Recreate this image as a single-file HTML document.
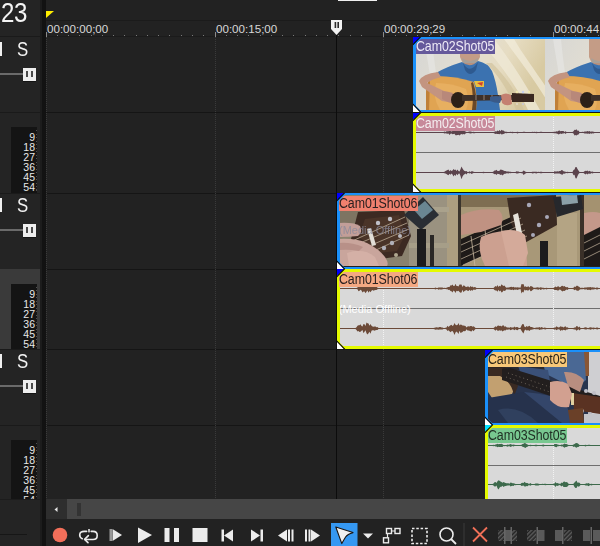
<!DOCTYPE html><html><head><meta charset="utf-8"><style>
*{margin:0;padding:0;box-sizing:border-box}
html,body{width:600px;height:546px;overflow:hidden;background:#222;font-family:"Liberation Sans",sans-serif;position:relative}
.a{position:absolute}
.S{font-size:19px;color:#f2f2f2;line-height:19px}
.num{font-size:10.5px;line-height:10px;color:#e8e8e8;text-align:right}
.rt{font-size:11.6px;color:#d8d8d8;line-height:12px;white-space:nowrap}
.lbl{font-size:14px;line-height:14px;white-space:nowrap;overflow:hidden;height:15px;width:79px}.lbl span{display:inline-block;transform:scaleX(0.885);transform-origin:0 0;letter-spacing:-0.1px;margin-left:-0.5px}
</style></head><body>
<div class="a" style="left:0px;top:0px;width:40px;height:546px;background:#242424;"></div>
<div class="a" style="left:40px;top:0px;width:6px;height:546px;background:#121212;"></div>
<div class="a" style="left:40px;top:0px;width:2px;height:546px;background:#1c1c1c;"></div>
<div class="a" style="left:1.3px;top:-2px;font-size:28px;color:#f4f4f4;line-height:30px;letter-spacing:-0.5px;transform:scaleX(0.86);transform-origin:0 0">23</div>
<div class="a" style="left:0px;top:36px;width:40px;height:1px;background:#1a1a1a;"></div>
<div class="a" style="left:0px;top:112px;width:40px;height:1px;background:#1a1a1a;"></div>
<div class="a" style="left:0px;top:42px;width:2px;height:14px;background:#f0f0f0;"></div>
<div class="a S" style="left:17px;top:40px;font-size:20px;transform:scaleX(0.84);transform-origin:0 0">S</div>
<div class="a" style="left:0px;top:73px;width:23px;height:2px;background:#6a6a6a;"></div>
<div class="a" style="left:23px;top:81px;width:13px;height:1px;background:#141414;"></div>
<div class="a" style="left:23px;top:68px;width:13px;height:13px;background:#eeeeee;"></div>
<div class="a" style="left:26px;top:71px;width:2px;height:6px;background:#4a4a4a;"></div>
<div class="a" style="left:31px;top:71px;width:2px;height:6px;background:#4a4a4a;"></div>
<div class="a" style="left:0px;top:193px;width:40px;height:1px;background:#1a1a1a;"></div>
<div class="a" style="left:11px;top:127px;width:26px;height:66px;background:#141414;"></div>
<div class="a num" style="left:10px;top:132px;width:25px">9<br>18<br>27<br>36<br>45<br>54</div>
<div class="a" style="left:36px;top:130px;width:1px;height:61px;background:repeating-linear-gradient(#505050 0 1px,transparent 1px 3.5px);"></div>
<div class="a" style="left:0px;top:269px;width:40px;height:1px;background:#1a1a1a;"></div>
<div class="a" style="left:0px;top:198px;width:2px;height:14px;background:#f0f0f0;"></div>
<div class="a S" style="left:17px;top:196px;font-size:20px;transform:scaleX(0.84);transform-origin:0 0">S</div>
<div class="a" style="left:0px;top:229px;width:23px;height:2px;background:#6a6a6a;"></div>
<div class="a" style="left:23px;top:237px;width:13px;height:1px;background:#141414;"></div>
<div class="a" style="left:23px;top:224px;width:13px;height:13px;background:#eeeeee;"></div>
<div class="a" style="left:26px;top:227px;width:2px;height:6px;background:#4a4a4a;"></div>
<div class="a" style="left:31px;top:227px;width:2px;height:6px;background:#4a4a4a;"></div>
<div class="a" style="left:0px;top:269px;width:40px;height:80px;background:#3a3a3a;"></div>
<div class="a" style="left:0px;top:349px;width:40px;height:1px;background:#1a1a1a;"></div>
<div class="a" style="left:11px;top:284px;width:26px;height:65px;background:#141414;"></div>
<div class="a num" style="left:10px;top:289px;width:25px">9<br>18<br>27<br>36<br>45<br>54</div>
<div class="a" style="left:36px;top:287px;width:1px;height:60px;background:repeating-linear-gradient(#505050 0 1px,transparent 1px 3.5px);"></div>
<div class="a" style="left:0px;top:425px;width:40px;height:1px;background:#1a1a1a;"></div>
<div class="a" style="left:0px;top:354px;width:2px;height:14px;background:#f0f0f0;"></div>
<div class="a S" style="left:17px;top:352px;font-size:20px;transform:scaleX(0.84);transform-origin:0 0">S</div>
<div class="a" style="left:0px;top:385px;width:23px;height:2px;background:#6a6a6a;"></div>
<div class="a" style="left:23px;top:393px;width:13px;height:1px;background:#141414;"></div>
<div class="a" style="left:23px;top:380px;width:13px;height:13px;background:#eeeeee;"></div>
<div class="a" style="left:26px;top:383px;width:2px;height:6px;background:#4a4a4a;"></div>
<div class="a" style="left:31px;top:383px;width:2px;height:6px;background:#4a4a4a;"></div>
<div class="a" style="left:0px;top:500px;width:40px;height:1px;background:#1a1a1a;"></div>
<div class="a" style="left:11px;top:440px;width:26px;height:60px;background:#141414;"></div>
<div class="a num" style="left:10px;top:445px;width:25px">9<br>18<br>27<br>36<br>45<br>54</div>
<div class="a" style="left:36px;top:443px;width:1px;height:55px;background:repeating-linear-gradient(#505050 0 1px,transparent 1px 3.5px);"></div>
<div class="a" style="left:0px;top:499px;width:40px;height:47px;background:#242424;"></div>
<div class="a" style="left:0px;top:499px;width:40px;height:1px;background:#1c1c1c;"></div>
<div class="a" style="left:0px;top:534px;width:27px;height:1px;background:#161616;"></div>
<div class="a" style="left:338px;top:0px;width:39px;height:1px;background:#f0f0f0;"></div>
<div class="a" style="left:46px;top:20px;width:554px;height:1px;background:#1b1b1b;"></div>
<svg class="a" style="left:46px;top:11px" width="9" height="8"><polygon points="0,0 8,0 0,7" fill="#ffee00"/></svg>
<div class="a" style="left:46px;top:36px;width:554px;height:1px;background:#1b1b1b;"></div>
<div class="a" style="left:57px;top:35px;width:1px;height:1px;background:#7a7a7a;"></div>
<div class="a" style="left:68px;top:35px;width:1px;height:1px;background:#7a7a7a;"></div>
<div class="a" style="left:79px;top:35px;width:1px;height:1px;background:#7a7a7a;"></div>
<div class="a" style="left:91px;top:35px;width:1px;height:1px;background:#7a7a7a;"></div>
<div class="a" style="left:102px;top:35px;width:1px;height:1px;background:#7a7a7a;"></div>
<div class="a" style="left:113px;top:35px;width:1px;height:1px;background:#7a7a7a;"></div>
<div class="a" style="left:124px;top:35px;width:1px;height:1px;background:#7a7a7a;"></div>
<div class="a" style="left:136px;top:35px;width:1px;height:1px;background:#7a7a7a;"></div>
<div class="a" style="left:147px;top:35px;width:1px;height:1px;background:#7a7a7a;"></div>
<div class="a" style="left:158px;top:35px;width:1px;height:1px;background:#7a7a7a;"></div>
<div class="a" style="left:169px;top:35px;width:1px;height:1px;background:#7a7a7a;"></div>
<div class="a" style="left:181px;top:35px;width:1px;height:1px;background:#7a7a7a;"></div>
<div class="a" style="left:192px;top:35px;width:1px;height:1px;background:#7a7a7a;"></div>
<div class="a" style="left:203px;top:35px;width:1px;height:1px;background:#7a7a7a;"></div>
<div class="a" style="left:226px;top:35px;width:1px;height:1px;background:#7a7a7a;"></div>
<div class="a" style="left:237px;top:35px;width:1px;height:1px;background:#7a7a7a;"></div>
<div class="a" style="left:248px;top:35px;width:1px;height:1px;background:#7a7a7a;"></div>
<div class="a" style="left:260px;top:35px;width:1px;height:1px;background:#7a7a7a;"></div>
<div class="a" style="left:271px;top:35px;width:1px;height:1px;background:#7a7a7a;"></div>
<div class="a" style="left:282px;top:35px;width:1px;height:1px;background:#7a7a7a;"></div>
<div class="a" style="left:293px;top:35px;width:1px;height:1px;background:#7a7a7a;"></div>
<div class="a" style="left:305px;top:35px;width:1px;height:1px;background:#7a7a7a;"></div>
<div class="a" style="left:316px;top:35px;width:1px;height:1px;background:#7a7a7a;"></div>
<div class="a" style="left:327px;top:35px;width:1px;height:1px;background:#7a7a7a;"></div>
<div class="a" style="left:338px;top:35px;width:1px;height:1px;background:#7a7a7a;"></div>
<div class="a" style="left:350px;top:35px;width:1px;height:1px;background:#7a7a7a;"></div>
<div class="a" style="left:361px;top:35px;width:1px;height:1px;background:#7a7a7a;"></div>
<div class="a" style="left:395px;top:35px;width:1px;height:1px;background:#7a7a7a;"></div>
<div class="a" style="left:406px;top:35px;width:1px;height:1px;background:#7a7a7a;"></div>
<div class="a" style="left:417px;top:35px;width:1px;height:1px;background:#7a7a7a;"></div>
<div class="a" style="left:429px;top:35px;width:1px;height:1px;background:#7a7a7a;"></div>
<div class="a" style="left:440px;top:35px;width:1px;height:1px;background:#7a7a7a;"></div>
<div class="a" style="left:451px;top:35px;width:1px;height:1px;background:#7a7a7a;"></div>
<div class="a" style="left:462px;top:35px;width:1px;height:1px;background:#7a7a7a;"></div>
<div class="a" style="left:474px;top:35px;width:1px;height:1px;background:#7a7a7a;"></div>
<div class="a" style="left:485px;top:35px;width:1px;height:1px;background:#7a7a7a;"></div>
<div class="a" style="left:496px;top:35px;width:1px;height:1px;background:#7a7a7a;"></div>
<div class="a" style="left:507px;top:35px;width:1px;height:1px;background:#7a7a7a;"></div>
<div class="a" style="left:519px;top:35px;width:1px;height:1px;background:#7a7a7a;"></div>
<div class="a" style="left:530px;top:35px;width:1px;height:1px;background:#7a7a7a;"></div>
<div class="a" style="left:564px;top:35px;width:1px;height:1px;background:#7a7a7a;"></div>
<div class="a" style="left:575px;top:35px;width:1px;height:1px;background:#7a7a7a;"></div>
<div class="a" style="left:586px;top:35px;width:1px;height:1px;background:#7a7a7a;"></div>
<div class="a" style="left:598px;top:35px;width:1px;height:1px;background:#7a7a7a;"></div>
<div class="a" style="left:46px;top:32px;width:1px;height:5px;background:#8a8a8a;"></div>
<div class="a rt" style="left:47px;top:22.5px">00:00:00;00</div>
<div class="a" style="left:215px;top:32px;width:1px;height:5px;background:#8a8a8a;"></div>
<div class="a rt" style="left:216px;top:22.5px">00:00:15;00</div>
<div class="a" style="left:383px;top:32px;width:1px;height:5px;background:#8a8a8a;"></div>
<div class="a rt" style="left:384px;top:22.5px">00:00:29;29</div>
<div class="a" style="left:553px;top:32px;width:1px;height:5px;background:#8a8a8a;"></div>
<div class="a rt" style="left:554px;top:22.5px">00:00:44;29</div>
<div class="a" style="left:46px;top:112px;width:554px;height:1px;background:#151515;"></div>
<div class="a" style="left:46px;top:193px;width:554px;height:1px;background:#151515;"></div>
<div class="a" style="left:46px;top:269px;width:554px;height:1px;background:#151515;"></div>
<div class="a" style="left:46px;top:349px;width:554px;height:1px;background:#151515;"></div>
<div class="a" style="left:46px;top:425px;width:554px;height:1px;background:#151515;"></div>
<div class="a" style="left:46px;top:500px;width:554px;height:1px;background:#151515;"></div>
<div class="a" style="left:46px;top:37px;width:1px;height:463px;background:repeating-linear-gradient(#3a3a3a 0 1px,transparent 1px 2px);"></div>
<div class="a" style="left:215px;top:37px;width:1px;height:463px;background:repeating-linear-gradient(#3a3a3a 0 1px,transparent 1px 2px);"></div>
<div class="a" style="left:383px;top:37px;width:1px;height:463px;background:repeating-linear-gradient(#3a3a3a 0 1px,transparent 1px 2px);"></div>
<div class="a" style="left:553px;top:37px;width:1px;height:463px;background:repeating-linear-gradient(#3a3a3a 0 1px,transparent 1px 2px);"></div>
<div class="a" style="left:416px;top:39px;width:184px;height:71px;overflow:hidden"><svg style="display:block;filter:blur(0.45px)" width="184" height="71" viewBox="0 0 184 71"><g transform="translate(0,0)">
<defs><linearGradient id="bg1" x1="0" y1="0" x2="1" y2="0.3"><stop offset="0" stop-color="#d6d6d4"/><stop offset="0.45" stop-color="#e2ded2"/><stop offset="0.7" stop-color="#e6dcc2"/><stop offset="1" stop-color="#d8caa2"/></linearGradient></defs>
<rect x="0" y="0" width="130" height="71" fill="url(#bg1)"/>
<path d="M62,0 C80,20 100,45 112,71 L124,71 C108,42 92,18 78,0Z" fill="#efe8d6" opacity="0.8"/>
<path d="M88,0 C104,22 118,40 130,60 L130,48 C118,30 106,14 98,0Z" fill="#f2ecdc" opacity="0.7"/>
<path d="M100,71 C94,55 84,38 70,24 L76,24 C90,38 102,55 108,71Z" fill="#cfc098" opacity="0.6"/>
<path d="M8,0 C12,25 16,45 18,71 L24,71 C22,45 18,22 16,0Z" fill="#e8e8e6" opacity="0.6"/>
<path d="M44,0 Q53,-6 63,0 L64,18 Q60,27 54,28 Q47,27 44,18Z" fill="#c49c86"/>
<path d="M46,19 Q54,25 62,19 L61,24 Q54,30 47,24Z" fill="#a8a098"/>
<path d="M48,24 L60,24 L62,32 L46,32Z" fill="#b8907c"/>
<path d="M20,34 Q30,28 46,23 Q54,30 62,22 Q72,24 76,32 Q80,42 82,56 L84,71 L56,71 L58,44 Q40,38 22,38Z" fill="#3b72b0"/>
<path d="M47,24 Q54,36 62,23 L60,31 Q54,39 49,31Z" fill="#2e5a90"/>
<path d="M10,71 L10,54 Q10,42 20,37 Q40,37 58,43 Q62,58 60,71Z" fill="#e0a452"/>
<path d="M20,44 Q36,44 50,50 Q54,62 50,71 L24,71 Q16,58 20,44Z" fill="#e8b264" opacity="0.8"/>
<path d="M10,71 L10,54 Q10,44 14,40 L13,71Z" fill="#c08038"/>
<path d="M57,43 Q62,58 60,71 L56,71 Q58,58 55,44Z" fill="#6a4828"/>
<path d="M3,42 Q6,35 22,33 L25,38 Q16,40 11,44 L28,52 L40,58 L38,64 L26,62 L6,48Z" fill="#c39480"/>
<path d="M26,52 Q36,52 42,58 L40,65 Q32,64 26,60Z" fill="#b8887a"/>
<ellipse cx="42" cy="61" rx="7" ry="8" fill="#2c2018"/>
<path d="M46,56 L97,56 L97,61 L46,62Z" fill="#3e3028"/>
<path d="M60,56 V61 M68,56 V61 M76,56 V61 M84,56 V61" stroke="#a89888" stroke-width="0.8"/>
<path d="M96,54 L118,55 L118,63 L96,63Z" fill="#3a2820"/>
<circle cx="101" cy="53" r="1.2" fill="#f0e8b0"/><circle cx="107" cy="53" r="1.2" fill="#c8d0f0"/><circle cx="113" cy="53" r="1.2" fill="#f0e8b0"/>
<circle cx="101" cy="65" r="1.1" fill="#e0d8c8"/><circle cx="107" cy="65" r="1.1" fill="#c8c8d8"/>
<path d="M74,58 Q80,56 86,58 L84,64 Q78,64 74,62Z" fill="#3a5a88"/>
<path d="M85,56 Q90,53 95,56 L96,65 Q90,68 86,64Z" fill="#c48070"/>
<path d="M58,42 L68,42 L68,48 L60,48Z" fill="#e8c040"/>
<path d="M61,44 L67,43 L66,47Z" fill="#d04030"/>
</g><g transform="translate(129,0)">
<defs><linearGradient id="bg2" x1="0" y1="0" x2="1" y2="0.3"><stop offset="0" stop-color="#d6d6d4"/><stop offset="0.45" stop-color="#e2ded2"/><stop offset="0.7" stop-color="#e6dcc2"/><stop offset="1" stop-color="#d8caa2"/></linearGradient></defs>
<rect x="0" y="0" width="130" height="71" fill="url(#bg2)"/>
<path d="M62,0 C80,20 100,45 112,71 L124,71 C108,42 92,18 78,0Z" fill="#efe8d6" opacity="0.8"/>
<path d="M88,0 C104,22 118,40 130,60 L130,48 C118,30 106,14 98,0Z" fill="#f2ecdc" opacity="0.7"/>
<path d="M100,71 C94,55 84,38 70,24 L76,24 C90,38 102,55 108,71Z" fill="#cfc098" opacity="0.6"/>
<path d="M8,0 C12,25 16,45 18,71 L24,71 C22,45 18,22 16,0Z" fill="#e8e8e6" opacity="0.6"/>
<path d="M44,0 Q53,-6 63,0 L64,18 Q60,27 54,28 Q47,27 44,18Z" fill="#c49c86"/>
<path d="M46,19 Q54,25 62,19 L61,24 Q54,30 47,24Z" fill="#a8a098"/>
<path d="M48,24 L60,24 L62,32 L46,32Z" fill="#b8907c"/>
<path d="M20,34 Q30,28 46,23 Q54,30 62,22 Q72,24 76,32 Q80,42 82,56 L84,71 L56,71 L58,44 Q40,38 22,38Z" fill="#3b72b0"/>
<path d="M47,24 Q54,36 62,23 L60,31 Q54,39 49,31Z" fill="#2e5a90"/>
<path d="M10,71 L10,54 Q10,42 20,37 Q40,37 58,43 Q62,58 60,71Z" fill="#e0a452"/>
<path d="M20,44 Q36,44 50,50 Q54,62 50,71 L24,71 Q16,58 20,44Z" fill="#e8b264" opacity="0.8"/>
<path d="M10,71 L10,54 Q10,44 14,40 L13,71Z" fill="#c08038"/>
<path d="M57,43 Q62,58 60,71 L56,71 Q58,58 55,44Z" fill="#6a4828"/>
<path d="M3,42 Q6,35 22,33 L25,38 Q16,40 11,44 L28,52 L40,58 L38,64 L26,62 L6,48Z" fill="#c39480"/>
<path d="M26,52 Q36,52 42,58 L40,65 Q32,64 26,60Z" fill="#b8887a"/>
<ellipse cx="42" cy="61" rx="7" ry="8" fill="#2c2018"/>
<path d="M46,56 L97,56 L97,61 L46,62Z" fill="#3e3028"/>
<path d="M60,56 V61 M68,56 V61 M76,56 V61 M84,56 V61" stroke="#a89888" stroke-width="0.8"/>
<path d="M96,54 L118,55 L118,63 L96,63Z" fill="#3a2820"/>
<circle cx="101" cy="53" r="1.2" fill="#f0e8b0"/><circle cx="107" cy="53" r="1.2" fill="#c8d0f0"/><circle cx="113" cy="53" r="1.2" fill="#f0e8b0"/>
<circle cx="101" cy="65" r="1.1" fill="#e0d8c8"/><circle cx="107" cy="65" r="1.1" fill="#c8c8d8"/>
<path d="M74,58 Q80,56 86,58 L84,64 Q78,64 74,62Z" fill="#3a5a88"/>
<path d="M85,56 Q90,53 95,56 L96,65 Q90,68 86,64Z" fill="#c48070"/>
<path d="M58,42 L68,42 L68,48 L60,48Z" fill="#e8c040"/>
<path d="M61,44 L67,43 L66,47Z" fill="#d04030"/>
</g></svg></div>
<div class="a" style="left:413px;top:37px;width:187px;height:75px;border:solid #1a90fa;border-width:2px 0 2px 3px"></div>
<svg class="a" style="left:413px;top:103px" width="10" height="9"><polygon points="0,0 9,9 0,9" fill="#1a90fa"/><polygon points="0,1.5 7,9 0,9" fill="#ffffff"/><line x1="-0.5" y1="0.8" x2="8" y2="9.5" stroke="#000" stroke-width="1.1"/></svg>
<div class="a lbl" style="left:416px;top:39px;background:#65599b;color:#eeeaf6"><span>Cam02Shot05</span></div>
<svg class="a" style="left:413px;top:37px" width="11" height="11"><polygon points="0,0 10,0 0,10" fill="#1a90fa"/><polygon points="0,0 7,0 0,7" fill="#0000ff"/><line x1="7.8" y1="-0.3" x2="-0.3" y2="7.8" stroke="#000" stroke-width="1.1"/></svg>
<div class="a" style="left:413px;top:113px;width:187px;height:79px;background:#d9d9d9"></div>
<div class="a" style="left:416px;top:152px;width:184px;height:1px;background:#6f6f6f"></div>
<div class="a" style="left:553px;top:115px;width:1px;height:75px;background:repeating-linear-gradient(#f2f2f2 0 1px,transparent 1px 2px)"></div>
<svg class="a" style="left:416px;top:122px;overflow:visible" width="185" height="20"><g transform="translate(0,10.5)"><path d="M0,-0.5 L0.5,-0.5 L1.5,-0.5 L2.5,-0.5 L3.5,-0.5 L4.5,-0.5 L5.5,-0.5 L6.5,-0.5 L7.5,-0.5 L8.5,-0.5 L9.5,-0.5 L10.5,-0.5 L11.5,-0.5 L12.5,-0.5 L13.5,-0.5 L14.5,-0.5 L15.5,-0.5 L16.5,-0.5 L17.5,-0.5 L18.5,-0.5 L19.5,-0.5 L20.5,-0.5 L21.5,-0.5 L22.5,-0.5 L23.5,-0.5 L24.5,-0.5 L25.5,-0.5 L26.5,-0.5 L27.5,-0.5 L28.5,-0.9 L29.5,-0.6 L30.5,-1.2 L31.5,-1.3 L32.5,-1.3 L33.5,-2.0 L34.5,-1.5 L35.5,-1.0 L36.5,-1.6 L37.5,-1.9 L38.5,-1.6 L39.5,-2.7 L40.5,-2.4 L41.5,-2.4 L42.5,-2.7 L43.5,-2.5 L44.5,-1.9 L45.5,-1.5 L46.5,-2.1 L47.5,-1.9 L48.5,-1.6 L49.5,-0.9 L50.5,-0.6 L51.5,-0.5 L52.5,-0.8 L53.5,-0.9 L54.5,-1.1 L55.5,-0.8 L56.5,-0.6 L57.5,-0.8 L58.5,-0.6 L59.5,-0.5 L60.5,-0.5 L61.5,-0.5 L62.5,-0.5 L63.5,-0.5 L64.5,-0.5 L65.5,-0.5 L66.5,-0.5 L67.5,-0.5 L68.5,-0.5 L69.5,-0.5 L70.5,-0.5 L71.5,-0.5 L72.5,-0.5 L73.5,-0.5 L74.5,-0.5 L75.5,-0.5 L76.5,-0.5 L77.5,-0.5 L78.5,-0.8 L79.5,-1.3 L80.5,-1.1 L81.5,-1.9 L82.5,-1.3 L83.5,-2.6 L84.5,-1.2 L85.5,-2.7 L86.5,-1.9 L87.5,-2.0 L88.5,-1.1 L89.5,-0.7 L90.5,-0.7 L91.5,-0.5 L92.5,-0.5 L93.5,-0.5 L94.5,-0.8 L95.5,-0.5 L96.5,-0.8 L97.5,-0.6 L98.5,-0.5 L99.5,-0.5 L100.5,-0.5 L101.5,-0.7 L102.5,-0.5 L103.5,-0.5 L104.5,-0.5 L105.5,-0.5 L106.5,-0.6 L107.5,-0.7 L108.5,-0.7 L109.5,-0.5 L110.5,-0.5 L111.5,-0.5 L112.5,-0.5 L113.5,-0.5 L114.5,-0.5 L115.5,-0.5 L116.5,-0.7 L117.5,-0.6 L118.5,-0.7 L119.5,-0.6 L120.5,-0.7 L121.5,-0.6 L122.5,-0.5 L123.5,-0.5 L124.5,-0.7 L125.5,-0.7 L126.5,-0.5 L127.5,-0.5 L128.5,-0.5 L129.5,-0.5 L130.5,-0.5 L131.5,-0.5 L132.5,-0.5 L133.5,-0.5 L134.5,-0.5 L135.5,-0.5 L136.5,-0.5 L137.5,-0.7 L138.5,-0.8 L139.5,-0.8 L140.5,-1.2 L141.5,-1.0 L142.5,-1.8 L143.5,-1.9 L144.5,-1.3 L145.5,-1.4 L146.5,-1.4 L147.5,-1.5 L148.5,-0.6 L149.5,-1.3 L150.5,-0.5 L151.5,-0.5 L152.5,-0.5 L153.5,-0.5 L154.5,-0.5 L155.5,-0.5 L156.5,-0.5 L157.5,-1.3 L158.5,-2.7 L159.5,-2.4 L160.5,-3.2 L161.5,-1.8 L162.5,-2.0 L163.5,-0.5 L164.5,-0.5 L165.5,-0.5 L166.5,-0.7 L167.5,-0.6 L168.5,-1.0 L169.5,-1.1 L170.5,-1.0 L171.5,-1.5 L172.5,-0.9 L173.5,-1.4 L174.5,-0.8 L175.5,-1.1 L176.5,-1.0 L177.5,-0.8 L178.5,-0.5 L179.5,-0.5 L180.5,-0.5 L181.5,-0.5 L182.5,-0.5 L183.5,-0.5 L184.5,-0.5 L184,-0.5 L184,0.5 L184.5,0.5 L183.5,0.5 L182.5,0.5 L181.5,0.5 L180.5,0.5 L179.5,0.5 L178.5,0.5 L177.5,0.9 L176.5,0.7 L175.5,1.2 L174.5,0.8 L173.5,1.4 L172.5,0.9 L171.5,1.2 L170.5,1.1 L169.5,1.0 L168.5,1.0 L167.5,0.6 L166.5,0.5 L165.5,0.5 L164.5,0.5 L163.5,0.5 L162.5,1.9 L161.5,2.2 L160.5,2.9 L159.5,2.6 L158.5,2.9 L157.5,1.0 L156.5,0.5 L155.5,0.5 L154.5,0.5 L153.5,0.5 L152.5,0.5 L151.5,0.5 L150.5,0.5 L149.5,1.5 L148.5,0.5 L147.5,1.1 L146.5,1.1 L145.5,1.6 L144.5,1.1 L143.5,1.6 L142.5,2.1 L141.5,1.2 L140.5,1.0 L139.5,0.7 L138.5,0.8 L137.5,0.7 L136.5,0.5 L135.5,0.5 L134.5,0.5 L133.5,0.5 L132.5,0.5 L131.5,0.5 L130.5,0.5 L129.5,0.5 L128.5,0.5 L127.5,0.5 L126.5,0.5 L125.5,0.5 L124.5,0.5 L123.5,0.5 L122.5,0.5 L121.5,0.5 L120.5,0.7 L119.5,0.5 L118.5,0.6 L117.5,0.6 L116.5,0.6 L115.5,0.5 L114.5,0.5 L113.5,0.5 L112.5,0.5 L111.5,0.5 L110.5,0.5 L109.5,0.5 L108.5,0.6 L107.5,0.6 L106.5,0.6 L105.5,0.5 L104.5,0.5 L103.5,0.5 L102.5,0.5 L101.5,0.9 L100.5,0.6 L99.5,0.5 L98.5,0.5 L97.5,0.5 L96.5,0.7 L95.5,0.5 L94.5,0.6 L93.5,0.5 L92.5,0.5 L91.5,0.6 L90.5,0.7 L89.5,0.6 L88.5,1.1 L87.5,1.6 L86.5,1.7 L85.5,2.1 L84.5,1.0 L83.5,1.8 L82.5,1.4 L81.5,1.4 L80.5,1.3 L79.5,1.5 L78.5,0.9 L77.5,0.5 L76.5,0.5 L75.5,0.5 L74.5,0.5 L73.5,0.5 L72.5,0.5 L71.5,0.5 L70.5,0.5 L69.5,0.5 L68.5,0.5 L67.5,0.5 L66.5,0.5 L65.5,0.5 L64.5,0.5 L63.5,0.5 L62.5,0.5 L61.5,0.5 L60.5,0.5 L59.5,0.5 L58.5,0.7 L57.5,0.8 L56.5,0.5 L55.5,0.8 L54.5,1.1 L53.5,0.8 L52.5,0.6 L51.5,0.5 L50.5,0.5 L49.5,1.1 L48.5,1.9 L47.5,1.6 L46.5,2.0 L45.5,1.4 L44.5,2.0 L43.5,3.0 L42.5,2.3 L41.5,2.6 L40.5,2.7 L39.5,2.8 L38.5,1.3 L37.5,1.5 L36.5,1.8 L35.5,1.0 L34.5,1.2 L33.5,2.4 L32.5,1.1 L31.5,1.3 L30.5,1.0 L29.5,0.7 L28.5,1.0 L27.5,0.5 L26.5,0.5 L25.5,0.5 L24.5,0.5 L23.5,0.5 L22.5,0.5 L21.5,0.5 L20.5,0.5 L19.5,0.5 L18.5,0.5 L17.5,0.5 L16.5,0.5 L15.5,0.5 L14.5,0.5 L13.5,0.5 L12.5,0.5 L11.5,0.5 L10.5,0.5 L9.5,0.5 L8.5,0.5 L7.5,0.5 L6.5,0.5 L5.5,0.5 L4.5,0.5 L3.5,0.5 L2.5,0.5 L1.5,0.5 L0.5,0.5 L0,0.5Z" fill="#5b434c"/></g></svg>
<svg class="a" style="left:416px;top:162px;overflow:visible" width="185" height="20"><g transform="translate(0,10.5)"><path d="M0,-0.5 L0.5,-0.5 L1.5,-0.5 L2.5,-0.5 L3.5,-0.5 L4.5,-0.5 L5.5,-0.5 L6.5,-0.5 L7.5,-0.5 L8.5,-0.5 L9.5,-0.5 L10.5,-0.5 L11.5,-0.5 L12.5,-0.5 L13.5,-0.5 L14.5,-0.5 L15.5,-0.5 L16.5,-0.5 L17.5,-0.5 L18.5,-0.5 L19.5,-0.5 L20.5,-0.5 L21.5,-0.5 L22.5,-0.5 L23.5,-0.5 L24.5,-0.5 L25.5,-0.5 L26.5,-0.5 L27.5,-0.5 L28.5,-0.8 L29.5,-1.4 L30.5,-1.9 L31.5,-2.4 L32.5,-3.0 L33.5,-1.3 L34.5,-2.4 L35.5,-1.4 L36.5,-1.9 L37.5,-3.5 L38.5,-2.5 L39.5,-3.1 L40.5,-1.6 L41.5,-3.1 L42.5,-1.4 L43.5,-0.9 L44.5,-3.3 L45.5,-6.0 L46.5,-3.9 L47.5,-2.4 L48.5,-1.5 L49.5,-1.3 L50.5,-1.6 L51.5,-0.5 L52.5,-0.5 L53.5,-1.2 L54.5,-0.6 L55.5,-1.3 L56.5,-1.2 L57.5,-0.8 L58.5,-0.6 L59.5,-0.5 L60.5,-0.5 L61.5,-0.5 L62.5,-0.5 L63.5,-0.5 L64.5,-0.5 L65.5,-0.5 L66.5,-0.5 L67.5,-0.7 L68.5,-0.5 L69.5,-0.5 L70.5,-0.5 L71.5,-0.5 L72.5,-0.5 L73.5,-0.5 L74.5,-0.5 L75.5,-0.5 L76.5,-0.5 L77.5,-1.0 L78.5,-1.9 L79.5,-2.0 L80.5,-2.7 L81.5,-1.4 L82.5,-1.5 L83.5,-1.7 L84.5,-2.9 L85.5,-2.8 L86.5,-2.5 L87.5,-1.9 L88.5,-1.5 L89.5,-1.5 L90.5,-1.1 L91.5,-1.0 L92.5,-0.9 L93.5,-0.7 L94.5,-0.8 L95.5,-0.5 L96.5,-0.5 L97.5,-0.6 L98.5,-0.5 L99.5,-0.5 L100.5,-1.2 L101.5,-0.9 L102.5,-0.9 L103.5,-0.5 L104.5,-0.5 L105.5,-0.6 L106.5,-0.7 L107.5,-2.0 L108.5,-1.4 L109.5,-0.8 L110.5,-0.5 L111.5,-0.5 L112.5,-0.5 L113.5,-0.5 L114.5,-0.5 L115.5,-0.6 L116.5,-0.8 L117.5,-0.8 L118.5,-0.7 L119.5,-0.7 L120.5,-0.8 L121.5,-0.5 L122.5,-0.7 L123.5,-0.6 L124.5,-0.7 L125.5,-0.8 L126.5,-0.5 L127.5,-0.5 L128.5,-0.5 L129.5,-0.5 L130.5,-0.5 L131.5,-0.5 L132.5,-0.5 L133.5,-0.5 L134.5,-0.5 L135.5,-0.5 L136.5,-0.5 L137.5,-0.5 L138.5,-1.2 L139.5,-1.0 L140.5,-1.1 L141.5,-1.2 L142.5,-1.0 L143.5,-1.4 L144.5,-1.5 L145.5,-2.4 L146.5,-2.2 L147.5,-1.2 L148.5,-1.1 L149.5,-0.8 L150.5,-0.6 L151.5,-0.7 L152.5,-0.5 L153.5,-0.5 L154.5,-0.5 L155.5,-0.5 L156.5,-0.5 L157.5,-2.5 L158.5,-2.9 L159.5,-5.6 L160.5,-5.6 L161.5,-3.5 L162.5,-2.0 L163.5,-0.5 L164.5,-0.5 L165.5,-0.5 L166.5,-0.5 L167.5,-0.5 L168.5,-1.2 L169.5,-1.7 L170.5,-1.5 L171.5,-1.9 L172.5,-0.9 L173.5,-1.8 L174.5,-1.1 L175.5,-0.7 L176.5,-1.0 L177.5,-0.6 L178.5,-0.5 L179.5,-0.5 L180.5,-0.5 L181.5,-0.5 L182.5,-0.5 L183.5,-0.5 L184.5,-0.5 L184,-0.5 L184,0.5 L184.5,0.5 L183.5,0.5 L182.5,0.5 L181.5,0.5 L180.5,0.5 L179.5,0.5 L178.5,0.5 L177.5,0.6 L176.5,0.9 L175.5,0.6 L174.5,1.3 L173.5,1.3 L172.5,0.9 L171.5,1.9 L170.5,1.0 L169.5,2.0 L168.5,1.3 L167.5,0.6 L166.5,0.6 L165.5,0.5 L164.5,0.5 L163.5,0.5 L162.5,1.4 L161.5,3.4 L160.5,6.1 L159.5,5.8 L158.5,2.2 L157.5,2.7 L156.5,0.5 L155.5,0.5 L154.5,0.5 L153.5,0.5 L152.5,0.5 L151.5,0.8 L150.5,0.5 L149.5,0.8 L148.5,1.2 L147.5,1.1 L146.5,2.2 L145.5,2.1 L144.5,1.5 L143.5,1.0 L142.5,1.0 L141.5,0.9 L140.5,1.1 L139.5,0.9 L138.5,1.3 L137.5,0.5 L136.5,0.5 L135.5,0.5 L134.5,0.5 L133.5,0.5 L132.5,0.5 L131.5,0.5 L130.5,0.5 L129.5,0.5 L128.5,0.5 L127.5,0.5 L126.5,0.6 L125.5,0.8 L124.5,0.8 L123.5,0.6 L122.5,0.6 L121.5,0.6 L120.5,0.9 L119.5,0.7 L118.5,0.5 L117.5,0.8 L116.5,0.9 L115.5,0.6 L114.5,0.5 L113.5,0.5 L112.5,0.5 L111.5,0.5 L110.5,0.5 L109.5,0.9 L108.5,1.7 L107.5,2.4 L106.5,0.8 L105.5,0.7 L104.5,0.5 L103.5,0.5 L102.5,0.8 L101.5,0.9 L100.5,1.0 L99.5,0.6 L98.5,0.5 L97.5,0.6 L96.5,0.5 L95.5,0.5 L94.5,0.7 L93.5,0.6 L92.5,1.0 L91.5,0.8 L90.5,0.8 L89.5,1.3 L88.5,1.3 L87.5,1.9 L86.5,2.9 L85.5,2.0 L84.5,2.5 L83.5,1.7 L82.5,1.5 L81.5,1.2 L80.5,2.6 L79.5,1.6 L78.5,1.8 L77.5,1.0 L76.5,0.5 L75.5,0.5 L74.5,0.5 L73.5,0.5 L72.5,0.5 L71.5,0.5 L70.5,0.5 L69.5,0.5 L68.5,0.5 L67.5,0.8 L66.5,0.5 L65.5,0.5 L64.5,0.5 L63.5,0.5 L62.5,0.5 L61.5,0.5 L60.5,0.5 L59.5,0.5 L58.5,0.6 L57.5,0.6 L56.5,1.0 L55.5,1.5 L54.5,0.6 L53.5,0.9 L52.5,0.6 L51.5,0.5 L50.5,1.9 L49.5,1.0 L48.5,1.7 L47.5,2.4 L46.5,4.0 L45.5,6.8 L44.5,3.4 L43.5,0.9 L42.5,1.3 L41.5,2.8 L40.5,1.3 L39.5,3.5 L38.5,2.3 L37.5,3.9 L36.5,2.1 L35.5,1.0 L34.5,2.3 L33.5,1.3 L32.5,2.8 L31.5,2.3 L30.5,1.6 L29.5,1.0 L28.5,0.7 L27.5,0.5 L26.5,0.5 L25.5,0.5 L24.5,0.5 L23.5,0.5 L22.5,0.5 L21.5,0.5 L20.5,0.5 L19.5,0.5 L18.5,0.5 L17.5,0.5 L16.5,0.5 L15.5,0.5 L14.5,0.5 L13.5,0.5 L12.5,0.5 L11.5,0.5 L10.5,0.5 L9.5,0.5 L8.5,0.5 L7.5,0.5 L6.5,0.5 L5.5,0.5 L4.5,0.5 L3.5,0.5 L2.5,0.5 L1.5,0.5 L0.5,0.5 L0,0.5Z" fill="#5b434c"/></g></svg>
<div class="a" style="left:413px;top:113px;width:187px;height:79px;border:solid #e4fa00;border-width:3px 0 3px 3px"></div>
<svg class="a" style="left:413px;top:183px" width="10" height="9"><polygon points="0,0 9,9 0,9" fill="#e4fa00"/><polygon points="0,1.5 7,9 0,9" fill="#ffffff"/><line x1="-0.5" y1="0.8" x2="8" y2="9.5" stroke="#000" stroke-width="1.1"/></svg>
<div class="a" style="left:413px;top:112px;width:187px;height:1px;background:#141414"></div>
<div class="a" style="left:413px;top:192px;width:187px;height:1px;background:#141414"></div>
<div class="a lbl" style="left:416px;top:116px;background:#c7899a;color:#f4eef0"><span>Cam02Shot05</span></div>
<svg class="a" style="left:413px;top:113px" width="11" height="11"><polygon points="0,0 10,0 0,10" fill="#e4fa00"/><polygon points="0,0 7,0 0,7" fill="#0000ff"/><line x1="7.8" y1="-0.3" x2="-0.3" y2="7.8" stroke="#000" stroke-width="1.1"/></svg>
<div class="a" style="left:339px;top:195px;width:261px;height:71px;overflow:hidden"><svg style="display:block;filter:blur(0.45px)" width="261" height="71" viewBox="0 0 261 71"><rect x="0" y="0" width="122" height="71" fill="#8a826e"/>
<rect x="0" y="14" width="70" height="14" fill="#7e7462"/>
<rect x="70" y="0" width="52" height="71" fill="#9a9280"/>
<rect x="108" y="0" width="11" height="71" fill="#ac9e80"/>
<rect x="70" y="12" width="40" height="5" fill="#aaa28c"/>
<rect x="70" y="48" width="40" height="5" fill="#a69e88"/>
<rect x="119" y="0" width="3" height="71" fill="#3a342c"/>
<path d="M19,17 L65,15 L72,41 L63,61 L41,64 L12,44Z" fill="#3c2a22"/>
<path d="M26,24 L60,20 L66,40 L58,56 L40,58 L20,42Z" fill="#4a3428"/>
<path d="M0,52 L66,22 M0,57 L68,28 M2,63 L70,34 M6,69 L70,40" stroke="#cbbca4" stroke-width="0.7"/>
<circle cx="39" cy="28" r="2.2" fill="#c0c0c8"/><circle cx="51" cy="24" r="2.2" fill="#c0c0c8"/><circle cx="53" cy="48" r="2.2" fill="#b0b0b8"/><circle cx="45" cy="53" r="2.2" fill="#b0b0b8"/><circle cx="61" cy="41" r="2" fill="#b8b8c0"/><circle cx="57" cy="60" r="2" fill="#b0a890"/>
<path d="M28,34 L32,33 L37,50 L33,51Z" fill="#e2ded6"/>
<path d="M65,20 L84,2 L100,20 L82,35Z" fill="#2a2e34"/>
<path d="M75,15 L86,6 L94,15 L83,24Z" fill="#6a8692"/>
<rect x="78" y="34" width="9" height="37" fill="#1c1c1e"/>
<rect x="91" y="40" width="4" height="31" fill="#2a2826"/>
<path d="M0,28 Q14,27 21,31 Q24,37 19,41 Q10,42 0,42Z" fill="#c29e98"/>
<path d="M0,44 Q16,43 28,48 Q40,54 46,62 Q50,68 48,71 L0,71Z" fill="#c9a59c"/>
<path d="M8,58 Q24,52 36,62 L40,71 L10,71Z" fill="#d4b0a6"/>
<path d="M0,48 Q12,47 24,52 L20,56 Q10,54 0,55Z" fill="#b89088"/><g transform="translate(122,0)"><rect x="0" y="0" width="123" height="71" fill="#a89878"/>
<rect x="0" y="0" width="92" height="12" fill="#7e6e52"/>
<rect x="96" y="18" width="20" height="53" fill="#b4a484"/>
<rect x="119" y="0" width="4" height="71" fill="#3a3028"/>
<path d="M0,44 L50,22 L95,2 L95,26 L50,48 L0,71Z" fill="#1e1a18"/>
<path d="M46,3 L95,0 L96,30 L60,50 L50,28Z" fill="#3a2a22"/>
<path d="M0,50 L60,23 M0,57 L62,29 M0,64 L64,35 M2,70 L66,41" stroke="#c8b8a0" stroke-width="0.7"/>
<path d="M10,41 L14,71 M24,35 L28,66 M40,28 L43,58" stroke="#c8b8a0" stroke-width="0.8"/>
<path d="M52,20 L57,18 L61,38 L56,40Z" fill="#e6e2da"/>
<circle cx="68" cy="10" r="2.2" fill="#a8a8b8"/><circle cx="78" cy="30" r="2.2" fill="#a8a8b8"/><circle cx="86" cy="22" r="2" fill="#a8a8b8"/><circle cx="72" cy="40" r="2" fill="#a8a8b8"/>
<path d="M92,2 L120,0 L122,14 L96,22Z" fill="#26282c"/>
<path d="M100,1 L116,0 L117,8 L101,10Z" fill="#8aa0a8"/>
<rect x="79" y="46" width="8" height="25" fill="#1c1c1e"/>
<path d="M0,20 Q18,12 38,15 Q44,22 40,30 L20,37 L0,40Z" fill="#c09282"/>
<path d="M20,42 Q36,34 56,37 Q66,46 66,71 L24,71 Q16,56 20,42Z" fill="#cca090"/>
<path d="M40,36 Q56,33 64,40 L67,58 L62,71 L48,71Z" fill="#d4aa9a"/></g><g transform="translate(245,0)"><rect width="16" height="71" fill="#a49270"/><path d="M0,18 Q10,16 16,18 L16,40 L0,42Z" fill="#c4988a"/><path d="M0,40 L16,32 L16,71 L0,71Z" fill="#1e1a18"/><path d="M0,48 L16,40 M0,56 L16,48 M0,64 L16,56" stroke="#c8b8a0" stroke-width="0.7"/></g><text x="0" y="39" font-family="Liberation Sans" font-size="11" fill="#8a8a9a" fill-opacity="0.8">(Media Offline)</text></svg></div>
<div class="a" style="left:337px;top:193px;width:263px;height:76px;border:solid #1a90fa;border-width:2px 0 2px 3px"></div>
<svg class="a" style="left:337px;top:260px" width="10" height="9"><polygon points="0,0 9,9 0,9" fill="#1a90fa"/><polygon points="0,1.5 7,9 0,9" fill="#ffffff"/><line x1="-0.5" y1="0.8" x2="8" y2="9.5" stroke="#000" stroke-width="1.1"/></svg>
<div class="a lbl" style="left:339px;top:196px;background:#f0806e;color:#2a2020"><span>Cam01Shot06</span></div>
<svg class="a" style="left:337px;top:193px" width="11" height="11"><polygon points="0,0 10,0 0,10" fill="#1a90fa"/><polygon points="0,0 7,0 0,7" fill="#0000ff"/><line x1="7.8" y1="-0.3" x2="-0.3" y2="7.8" stroke="#000" stroke-width="1.1"/></svg>
<div class="a" style="left:337px;top:269px;width:263px;height:80px;background:#d9d9d9"></div>
<div class="a" style="left:340px;top:308px;width:260px;height:1px;background:#6f6f6f"></div>
<div class="a" style="left:383px;top:272px;width:1px;height:74px;background:repeating-linear-gradient(#f2f2f2 0 1px,transparent 1px 2px)"></div>
<div class="a" style="left:553px;top:272px;width:1px;height:74px;background:repeating-linear-gradient(#f2f2f2 0 1px,transparent 1px 2px)"></div>
<div class="a" style="left:338.8px;top:303px;font-size:11px;line-height:12px;color:#ffffff;white-space:nowrap">(Media Offline)</div>
<svg class="a" style="left:340px;top:278px;overflow:visible" width="261" height="20"><g transform="translate(0,10.5)"><path d="M0,-0.5 L0.5,-0.5 L1.5,-0.5 L2.5,-0.5 L3.5,-0.5 L4.5,-0.5 L5.5,-0.5 L6.5,-0.5 L7.5,-0.5 L8.5,-0.5 L9.5,-0.5 L10.5,-0.5 L11.5,-0.5 L12.5,-0.5 L13.5,-0.5 L14.5,-0.5 L15.5,-0.5 L16.5,-0.6 L17.5,-0.9 L18.5,-2.5 L19.5,-2.8 L20.5,-1.7 L21.5,-1.7 L22.5,-3.6 L23.5,-3.9 L24.5,-2.9 L25.5,-4.2 L26.5,-3.1 L27.5,-2.2 L28.5,-3.7 L29.5,-2.2 L30.5,-3.2 L31.5,-2.2 L32.5,-1.6 L33.5,-3.1 L34.5,-2.0 L35.5,-1.6 L36.5,-2.0 L37.5,-0.7 L38.5,-0.5 L39.5,-0.5 L40.5,-0.5 L41.5,-0.5 L42.5,-0.5 L43.5,-0.5 L44.5,-0.5 L45.5,-0.5 L46.5,-0.5 L47.5,-0.5 L48.5,-0.5 L49.5,-0.5 L50.5,-0.5 L51.5,-0.5 L52.5,-0.5 L53.5,-0.5 L54.5,-0.5 L55.5,-0.5 L56.5,-0.5 L57.5,-0.5 L58.5,-0.5 L59.5,-0.5 L60.5,-0.5 L61.5,-0.5 L62.5,-0.5 L63.5,-0.5 L64.5,-0.5 L65.5,-0.5 L66.5,-0.5 L67.5,-0.5 L68.5,-0.5 L69.5,-0.5 L70.5,-0.5 L71.5,-0.5 L72.5,-0.5 L73.5,-0.5 L74.5,-0.5 L75.5,-0.5 L76.5,-0.5 L77.5,-0.5 L78.5,-0.5 L79.5,-0.5 L80.5,-0.5 L81.5,-0.5 L82.5,-0.5 L83.5,-0.5 L84.5,-0.5 L85.5,-0.5 L86.5,-0.5 L87.5,-0.5 L88.5,-0.5 L89.5,-0.5 L90.5,-0.5 L91.5,-0.5 L92.5,-0.5 L93.5,-0.5 L94.5,-0.5 L95.5,-0.9 L96.5,-0.6 L97.5,-0.5 L98.5,-1.1 L99.5,-1.1 L100.5,-1.0 L101.5,-0.9 L102.5,-1.0 L103.5,-0.6 L104.5,-0.7 L105.5,-0.5 L106.5,-0.7 L107.5,-1.2 L108.5,-1.4 L109.5,-1.4 L110.5,-3.2 L111.5,-3.0 L112.5,-4.1 L113.5,-2.6 L114.5,-2.4 L115.5,-4.8 L116.5,-2.6 L117.5,-2.5 L118.5,-2.0 L119.5,-3.9 L120.5,-4.1 L121.5,-3.9 L122.5,-1.6 L123.5,-3.2 L124.5,-2.8 L125.5,-1.8 L126.5,-1.5 L127.5,-1.9 L128.5,-2.0 L129.5,-1.1 L130.5,-2.5 L131.5,-1.4 L132.5,-2.0 L133.5,-0.9 L134.5,-1.6 L135.5,-1.2 L136.5,-0.5 L137.5,-0.5 L138.5,-0.5 L139.5,-0.5 L140.5,-0.5 L141.5,-0.5 L142.5,-0.5 L143.5,-0.5 L144.5,-0.5 L145.5,-0.5 L146.5,-0.5 L147.5,-0.5 L148.5,-0.5 L149.5,-0.5 L150.5,-0.5 L151.5,-0.5 L152.5,-0.5 L153.5,-0.5 L154.5,-1.6 L155.5,-2.5 L156.5,-1.7 L157.5,-3.5 L158.5,-1.6 L159.5,-2.7 L160.5,-2.1 L161.5,-4.2 L162.5,-3.2 L163.5,-2.4 L164.5,-3.1 L165.5,-1.6 L166.5,-0.7 L167.5,-0.9 L168.5,-1.1 L169.5,-1.2 L170.5,-1.6 L171.5,-1.8 L172.5,-1.2 L173.5,-1.7 L174.5,-1.0 L175.5,-1.3 L176.5,-0.9 L177.5,-1.2 L178.5,-1.0 L179.5,-0.9 L180.5,-0.7 L181.5,-4.5 L182.5,-4.3 L183.5,-4.5 L184.5,-1.4 L185.5,-2.2 L186.5,-1.4 L187.5,-1.7 L188.5,-2.2 L189.5,-1.1 L190.5,-2.5 L191.5,-2.2 L192.5,-1.8 L193.5,-0.7 L194.5,-0.8 L195.5,-0.7 L196.5,-0.9 L197.5,-1.2 L198.5,-1.1 L199.5,-0.7 L200.5,-1.3 L201.5,-0.9 L202.5,-0.8 L203.5,-0.8 L204.5,-0.6 L205.5,-0.5 L206.5,-0.8 L207.5,-0.5 L208.5,-0.5 L209.5,-0.5 L210.5,-0.5 L211.5,-0.5 L212.5,-0.5 L213.5,-0.5 L214.5,-1.3 L215.5,-1.9 L216.5,-1.2 L217.5,-1.9 L218.5,-2.3 L219.5,-1.3 L220.5,-1.6 L221.5,-2.6 L222.5,-2.8 L223.5,-1.9 L224.5,-2.4 L225.5,-1.6 L226.5,-1.2 L227.5,-1.5 L228.5,-0.5 L229.5,-0.5 L230.5,-0.5 L231.5,-0.5 L232.5,-0.5 L233.5,-0.8 L234.5,-2.0 L235.5,-1.5 L236.5,-2.8 L237.5,-2.8 L238.5,-2.0 L239.5,-1.4 L240.5,-0.6 L241.5,-0.7 L242.5,-0.7 L243.5,-0.5 L244.5,-1.1 L245.5,-1.0 L246.5,-0.9 L247.5,-1.3 L248.5,-1.2 L249.5,-1.2 L250.5,-1.5 L251.5,-1.1 L252.5,-1.2 L253.5,-1.0 L254.5,-0.9 L255.5,-0.5 L256.5,-1.1 L257.5,-0.9 L258.5,-0.5 L259.5,-0.5 L260.5,-0.5 L260,-0.5 L260,0.5 L260.5,0.5 L259.5,0.5 L258.5,0.5 L257.5,1.0 L256.5,1.1 L255.5,0.6 L254.5,0.7 L253.5,0.9 L252.5,1.1 L251.5,1.1 L250.5,1.7 L249.5,1.3 L248.5,1.2 L247.5,1.4 L246.5,0.7 L245.5,1.0 L244.5,0.9 L243.5,0.5 L242.5,0.8 L241.5,0.8 L240.5,0.7 L239.5,1.3 L238.5,2.3 L237.5,2.2 L236.5,2.0 L235.5,1.1 L234.5,1.8 L233.5,0.8 L232.5,0.5 L231.5,0.5 L230.5,0.5 L229.5,0.5 L228.5,0.5 L227.5,1.4 L226.5,1.0 L225.5,1.7 L224.5,2.5 L223.5,2.2 L222.5,2.9 L221.5,2.2 L220.5,1.2 L219.5,1.0 L218.5,1.9 L217.5,2.0 L216.5,1.4 L215.5,1.5 L214.5,1.5 L213.5,0.5 L212.5,0.5 L211.5,0.5 L210.5,0.5 L209.5,0.5 L208.5,0.5 L207.5,0.5 L206.5,0.9 L205.5,0.5 L204.5,0.8 L203.5,0.9 L202.5,0.6 L201.5,0.9 L200.5,1.5 L199.5,0.6 L198.5,1.2 L197.5,1.1 L196.5,0.8 L195.5,0.8 L194.5,0.6 L193.5,0.7 L192.5,1.4 L191.5,2.4 L190.5,2.8 L189.5,0.8 L188.5,1.9 L187.5,1.9 L186.5,1.5 L185.5,1.9 L184.5,1.1 L183.5,4.0 L182.5,3.3 L181.5,4.9 L180.5,0.6 L179.5,0.8 L178.5,1.0 L177.5,1.4 L176.5,1.0 L175.5,1.3 L174.5,1.0 L173.5,1.8 L172.5,1.1 L171.5,1.4 L170.5,1.3 L169.5,1.1 L168.5,0.9 L167.5,0.9 L166.5,0.7 L165.5,1.9 L164.5,2.6 L163.5,2.1 L162.5,3.5 L161.5,4.0 L160.5,1.9 L159.5,3.1 L158.5,1.2 L157.5,3.3 L156.5,2.0 L155.5,2.0 L154.5,1.6 L153.5,0.5 L152.5,0.5 L151.5,0.5 L150.5,0.5 L149.5,0.5 L148.5,0.5 L147.5,0.5 L146.5,0.5 L145.5,0.5 L144.5,0.5 L143.5,0.5 L142.5,0.5 L141.5,0.5 L140.5,0.5 L139.5,0.5 L138.5,0.5 L137.5,0.5 L136.5,0.5 L135.5,1.3 L134.5,1.2 L133.5,1.1 L132.5,2.3 L131.5,1.4 L130.5,2.6 L129.5,1.3 L128.5,2.4 L127.5,2.2 L126.5,1.4 L125.5,1.9 L124.5,2.4 L123.5,3.7 L122.5,1.3 L121.5,4.1 L120.5,4.2 L119.5,3.5 L118.5,2.3 L117.5,2.8 L116.5,2.2 L115.5,4.6 L114.5,2.8 L113.5,1.9 L112.5,3.9 L111.5,2.7 L110.5,2.4 L109.5,1.3 L108.5,1.4 L107.5,0.8 L106.5,0.8 L105.5,0.5 L104.5,0.6 L103.5,0.5 L102.5,0.8 L101.5,0.9 L100.5,1.1 L99.5,0.7 L98.5,1.3 L97.5,0.5 L96.5,0.5 L95.5,0.9 L94.5,0.5 L93.5,0.5 L92.5,0.5 L91.5,0.5 L90.5,0.5 L89.5,0.5 L88.5,0.5 L87.5,0.5 L86.5,0.5 L85.5,0.5 L84.5,0.5 L83.5,0.5 L82.5,0.5 L81.5,0.5 L80.5,0.5 L79.5,0.5 L78.5,0.5 L77.5,0.5 L76.5,0.5 L75.5,0.5 L74.5,0.5 L73.5,0.5 L72.5,0.5 L71.5,0.5 L70.5,0.5 L69.5,0.5 L68.5,0.5 L67.5,0.5 L66.5,0.5 L65.5,0.5 L64.5,0.5 L63.5,0.5 L62.5,0.5 L61.5,0.5 L60.5,0.5 L59.5,0.5 L58.5,0.5 L57.5,0.5 L56.5,0.5 L55.5,0.5 L54.5,0.5 L53.5,0.5 L52.5,0.5 L51.5,0.5 L50.5,0.5 L49.5,0.5 L48.5,0.5 L47.5,0.5 L46.5,0.5 L45.5,0.5 L44.5,0.5 L43.5,0.5 L42.5,0.5 L41.5,0.5 L40.5,0.5 L39.5,0.5 L38.5,0.5 L37.5,0.7 L36.5,1.6 L35.5,1.4 L34.5,1.7 L33.5,2.3 L32.5,1.4 L31.5,2.2 L30.5,3.7 L29.5,2.6 L28.5,4.2 L27.5,2.0 L26.5,3.2 L25.5,4.8 L24.5,3.1 L23.5,3.1 L22.5,4.0 L21.5,2.0 L20.5,1.3 L19.5,2.3 L18.5,2.7 L17.5,0.8 L16.5,0.5 L15.5,0.5 L14.5,0.5 L13.5,0.5 L12.5,0.5 L11.5,0.5 L10.5,0.5 L9.5,0.5 L8.5,0.5 L7.5,0.5 L6.5,0.5 L5.5,0.5 L4.5,0.5 L3.5,0.5 L2.5,0.5 L1.5,0.5 L0.5,0.5 L0,0.5Z" fill="#6c4a38"/></g></svg>
<svg class="a" style="left:340px;top:318px;overflow:visible" width="261" height="20"><g transform="translate(0,10.5)"><path d="M0,-0.5 L0.5,-0.5 L1.5,-0.5 L2.5,-0.5 L3.5,-0.5 L4.5,-0.5 L5.5,-0.5 L6.5,-0.5 L7.5,-0.5 L8.5,-0.5 L9.5,-0.5 L10.5,-0.5 L11.5,-0.5 L12.5,-0.5 L13.5,-0.5 L14.5,-0.5 L15.5,-0.5 L16.5,-1.3 L17.5,-2.7 L18.5,-3.3 L19.5,-3.3 L20.5,-4.2 L21.5,-2.4 L22.5,-2.0 L23.5,-4.4 L24.5,-4.3 L25.5,-2.6 L26.5,-5.9 L27.5,-5.2 L28.5,-5.0 L29.5,-2.7 L30.5,-4.5 L31.5,-2.8 L32.5,-2.0 L33.5,-1.7 L34.5,-2.1 L35.5,-1.9 L36.5,-1.2 L37.5,-1.4 L38.5,-0.5 L39.5,-0.5 L40.5,-0.5 L41.5,-0.5 L42.5,-0.5 L43.5,-0.5 L44.5,-0.5 L45.5,-0.5 L46.5,-0.5 L47.5,-0.5 L48.5,-0.5 L49.5,-0.5 L50.5,-0.5 L51.5,-0.5 L52.5,-0.5 L53.5,-0.5 L54.5,-0.5 L55.5,-0.5 L56.5,-0.5 L57.5,-0.5 L58.5,-0.5 L59.5,-0.5 L60.5,-0.5 L61.5,-0.5 L62.5,-0.5 L63.5,-0.5 L64.5,-0.5 L65.5,-0.5 L66.5,-0.5 L67.5,-0.5 L68.5,-0.5 L69.5,-0.5 L70.5,-0.5 L71.5,-0.5 L72.5,-0.5 L73.5,-0.5 L74.5,-0.5 L75.5,-0.5 L76.5,-0.5 L77.5,-0.5 L78.5,-0.5 L79.5,-0.5 L80.5,-0.5 L81.5,-0.5 L82.5,-0.5 L83.5,-0.5 L84.5,-0.5 L85.5,-0.5 L86.5,-0.5 L87.5,-0.5 L88.5,-0.5 L89.5,-0.5 L90.5,-0.5 L91.5,-0.5 L92.5,-0.5 L93.5,-0.5 L94.5,-0.8 L95.5,-1.1 L96.5,-1.2 L97.5,-0.9 L98.5,-1.1 L99.5,-1.5 L100.5,-1.4 L101.5,-0.9 L102.5,-1.1 L103.5,-0.6 L104.5,-0.5 L105.5,-0.8 L106.5,-0.9 L107.5,-2.8 L108.5,-1.4 L109.5,-2.5 L110.5,-3.3 L111.5,-3.7 L112.5,-2.4 L113.5,-3.3 L114.5,-5.5 L115.5,-3.7 L116.5,-3.3 L117.5,-3.4 L118.5,-5.5 L119.5,-3.0 L120.5,-3.9 L121.5,-3.7 L122.5,-3.1 L123.5,-2.9 L124.5,-2.7 L125.5,-2.4 L126.5,-0.9 L127.5,-1.9 L128.5,-2.3 L129.5,-2.0 L130.5,-2.4 L131.5,-2.6 L132.5,-1.7 L133.5,-2.3 L134.5,-1.4 L135.5,-0.6 L136.5,-0.5 L137.5,-0.5 L138.5,-0.5 L139.5,-0.5 L140.5,-0.5 L141.5,-0.5 L142.5,-0.5 L143.5,-0.5 L144.5,-0.5 L145.5,-0.5 L146.5,-0.5 L147.5,-0.5 L148.5,-0.5 L149.5,-0.5 L150.5,-0.5 L151.5,-0.5 L152.5,-0.5 L153.5,-0.5 L154.5,-1.3 L155.5,-2.2 L156.5,-1.4 L157.5,-2.8 L158.5,-3.1 L159.5,-2.4 L160.5,-2.8 L161.5,-2.0 L162.5,-3.0 L163.5,-3.3 L164.5,-1.8 L165.5,-2.3 L166.5,-1.3 L167.5,-1.1 L168.5,-1.0 L169.5,-0.7 L170.5,-1.4 L171.5,-1.0 L172.5,-0.9 L173.5,-0.9 L174.5,-1.9 L175.5,-0.9 L176.5,-1.6 L177.5,-1.5 L178.5,-0.7 L179.5,-0.6 L180.5,-0.7 L181.5,-2.9 L182.5,-4.4 L183.5,-4.5 L184.5,-1.8 L185.5,-1.2 L186.5,-2.5 L187.5,-1.8 L188.5,-2.3 L189.5,-2.8 L190.5,-1.4 L191.5,-1.4 L192.5,-1.2 L193.5,-0.7 L194.5,-0.6 L195.5,-0.7 L196.5,-0.9 L197.5,-1.0 L198.5,-1.1 L199.5,-1.4 L200.5,-0.8 L201.5,-1.4 L202.5,-0.9 L203.5,-0.6 L204.5,-1.1 L205.5,-0.8 L206.5,-0.5 L207.5,-0.5 L208.5,-0.5 L209.5,-0.5 L210.5,-0.5 L211.5,-0.5 L212.5,-0.5 L213.5,-0.5 L214.5,-1.1 L215.5,-0.9 L216.5,-2.2 L217.5,-1.4 L218.5,-1.1 L219.5,-1.2 L220.5,-2.3 L221.5,-1.8 L222.5,-1.8 L223.5,-1.1 L224.5,-1.7 L225.5,-2.2 L226.5,-1.0 L227.5,-1.2 L228.5,-0.5 L229.5,-0.5 L230.5,-0.5 L231.5,-0.5 L232.5,-0.5 L233.5,-0.6 L234.5,-0.9 L235.5,-1.1 L236.5,-2.4 L237.5,-2.3 L238.5,-1.1 L239.5,-2.0 L240.5,-0.6 L241.5,-0.5 L242.5,-0.6 L243.5,-0.5 L244.5,-0.9 L245.5,-1.2 L246.5,-0.9 L247.5,-0.6 L248.5,-0.6 L249.5,-1.1 L250.5,-1.3 L251.5,-0.9 L252.5,-0.7 L253.5,-1.1 L254.5,-0.7 L255.5,-0.6 L256.5,-0.9 L257.5,-1.0 L258.5,-0.5 L259.5,-0.5 L260.5,-0.5 L260,-0.5 L260,0.5 L260.5,0.5 L259.5,0.5 L258.5,0.6 L257.5,1.0 L256.5,0.8 L255.5,0.6 L254.5,0.5 L253.5,0.9 L252.5,0.6 L251.5,0.7 L250.5,1.3 L249.5,0.8 L248.5,0.7 L247.5,0.5 L246.5,0.9 L245.5,1.1 L244.5,0.8 L243.5,0.5 L242.5,0.5 L241.5,0.5 L240.5,0.7 L239.5,2.1 L238.5,0.8 L237.5,1.6 L236.5,2.2 L235.5,1.1 L234.5,0.9 L233.5,0.7 L232.5,0.5 L231.5,0.5 L230.5,0.5 L229.5,0.5 L228.5,0.5 L227.5,1.1 L226.5,1.0 L225.5,2.1 L224.5,1.6 L223.5,1.2 L222.5,2.1 L221.5,1.5 L220.5,2.6 L219.5,0.9 L218.5,0.8 L217.5,1.1 L216.5,1.7 L215.5,0.7 L214.5,1.3 L213.5,0.5 L212.5,0.5 L211.5,0.5 L210.5,0.5 L209.5,0.5 L208.5,0.5 L207.5,0.6 L206.5,0.5 L205.5,0.9 L204.5,0.8 L203.5,0.6 L202.5,0.8 L201.5,1.1 L200.5,0.9 L199.5,1.5 L198.5,0.8 L197.5,0.8 L196.5,0.8 L195.5,0.7 L194.5,0.6 L193.5,0.8 L192.5,0.9 L191.5,1.2 L190.5,1.2 L189.5,2.4 L188.5,1.8 L187.5,1.8 L186.5,2.1 L185.5,0.9 L184.5,1.9 L183.5,5.0 L182.5,3.7 L181.5,2.2 L180.5,0.6 L179.5,0.5 L178.5,0.8 L177.5,1.7 L176.5,1.5 L175.5,0.8 L174.5,1.7 L173.5,1.0 L172.5,0.8 L171.5,1.2 L170.5,1.7 L169.5,0.7 L168.5,1.1 L167.5,1.2 L166.5,0.9 L165.5,2.0 L164.5,1.7 L163.5,2.3 L162.5,3.0 L161.5,1.8 L160.5,2.2 L159.5,1.7 L158.5,2.2 L157.5,2.3 L156.5,1.1 L155.5,2.2 L154.5,1.2 L153.5,0.5 L152.5,0.5 L151.5,0.5 L150.5,0.5 L149.5,0.5 L148.5,0.5 L147.5,0.5 L146.5,0.5 L145.5,0.5 L144.5,0.5 L143.5,0.5 L142.5,0.5 L141.5,0.5 L140.5,0.5 L139.5,0.5 L138.5,0.5 L137.5,0.5 L136.5,0.5 L135.5,0.6 L134.5,1.5 L133.5,2.7 L132.5,1.4 L131.5,3.0 L130.5,2.7 L129.5,2.2 L128.5,2.0 L127.5,1.9 L126.5,0.8 L125.5,2.5 L124.5,2.8 L123.5,2.4 L122.5,3.4 L121.5,4.0 L120.5,4.4 L119.5,2.2 L118.5,5.6 L117.5,4.1 L116.5,3.0 L115.5,4.0 L114.5,6.6 L113.5,3.9 L112.5,2.6 L111.5,2.8 L110.5,3.8 L109.5,2.8 L108.5,1.7 L107.5,2.6 L106.5,0.9 L105.5,0.6 L104.5,0.5 L103.5,0.5 L102.5,1.0 L101.5,1.1 L100.5,1.1 L99.5,1.1 L98.5,1.2 L97.5,1.0 L96.5,1.1 L95.5,1.3 L94.5,0.7 L93.5,0.5 L92.5,0.5 L91.5,0.5 L90.5,0.5 L89.5,0.5 L88.5,0.5 L87.5,0.5 L86.5,0.5 L85.5,0.5 L84.5,0.5 L83.5,0.5 L82.5,0.5 L81.5,0.5 L80.5,0.5 L79.5,0.5 L78.5,0.5 L77.5,0.5 L76.5,0.5 L75.5,0.5 L74.5,0.5 L73.5,0.5 L72.5,0.5 L71.5,0.5 L70.5,0.5 L69.5,0.5 L68.5,0.5 L67.5,0.5 L66.5,0.5 L65.5,0.5 L64.5,0.5 L63.5,0.5 L62.5,0.5 L61.5,0.5 L60.5,0.5 L59.5,0.5 L58.5,0.5 L57.5,0.5 L56.5,0.5 L55.5,0.5 L54.5,0.5 L53.5,0.5 L52.5,0.5 L51.5,0.5 L50.5,0.5 L49.5,0.5 L48.5,0.5 L47.5,0.5 L46.5,0.5 L45.5,0.5 L44.5,0.5 L43.5,0.5 L42.5,0.5 L41.5,0.5 L40.5,0.5 L39.5,0.5 L38.5,0.5 L37.5,1.5 L36.5,1.4 L35.5,1.7 L34.5,2.3 L33.5,1.8 L32.5,1.7 L31.5,2.2 L30.5,5.2 L29.5,3.2 L28.5,4.8 L27.5,6.0 L26.5,4.7 L25.5,1.8 L24.5,3.3 L23.5,4.8 L22.5,1.6 L21.5,2.3 L20.5,3.2 L19.5,3.4 L18.5,2.4 L17.5,2.9 L16.5,1.5 L15.5,0.5 L14.5,0.5 L13.5,0.5 L12.5,0.5 L11.5,0.5 L10.5,0.5 L9.5,0.5 L8.5,0.5 L7.5,0.5 L6.5,0.5 L5.5,0.5 L4.5,0.5 L3.5,0.5 L2.5,0.5 L1.5,0.5 L0.5,0.5 L0,0.5Z" fill="#6c4a38"/></g></svg>
<div class="a" style="left:337px;top:269px;width:263px;height:80px;border:solid #e4fa00;border-width:3px 0 3px 3px"></div>
<svg class="a" style="left:337px;top:340px" width="10" height="9"><polygon points="0,0 9,9 0,9" fill="#e4fa00"/><polygon points="0,1.5 7,9 0,9" fill="#ffffff"/><line x1="-0.5" y1="0.8" x2="8" y2="9.5" stroke="#000" stroke-width="1.1"/></svg>
<div class="a lbl" style="left:339px;top:272px;background:#f4a882;color:#2a2020"><span>Cam01Shot06</span></div>
<svg class="a" style="left:337px;top:269px" width="11" height="11"><polygon points="0,0 10,0 0,10" fill="#e4fa00"/><polygon points="0,0 7,0 0,7" fill="#0000ff"/><line x1="7.8" y1="-0.3" x2="-0.3" y2="7.8" stroke="#000" stroke-width="1.1"/></svg>
<div class="a" style="left:488px;top:352px;width:112px;height:71px;overflow:hidden"><svg style="display:block;filter:blur(0.45px)" width="112" height="71" viewBox="0 0 112 71"><rect width="112" height="71" fill="#28344e"/>
<rect x="0" y="0" width="56" height="18" fill="#2a2a30"/>
<rect x="100" y="0" width="12" height="71" fill="#cfcfd2"/>
<path d="M95,0 L101,0 L101,24 L96,24Z" fill="#8a5634"/>
<path d="M52,0 L96,0 L98,28 Q90,36 80,33 L58,22Z" fill="#4a6894"/>
<path d="M30,14 L60,18 L62,30 L36,30Z" fill="#3a5078"/>
<path d="M0,14 L16,14 L28,26 L4,20 L0,22Z" fill="#2e2420"/>
<path d="M2,22 L24,24 Q30,32 24,42 Q14,48 4,46 L0,40 L0,24Z" fill="#c2a070"/>
<path d="M0,16 L14,16 Q26,22 30,34 L26,44 Q24,30 12,24 L0,24Z" fill="#3a2a22"/>
<path d="M0,46 L36,40 Q60,46 74,71 L0,71Z" fill="#26324c"/>
<path d="M36,40 L74,71 L86,71 L76,48 Q60,42 36,40Z" fill="#34466a"/>
<path d="M10,58 Q30,52 50,71 L20,71Z" fill="#30405e"/>
<path d="M14,17 L22,16 L112,44 L112,56 L96,55 L14,28Z" fill="#221e1e"/>
<path d="M20,21 L104,49 M18,25 L100,53" stroke="#8a7e70" stroke-width="0.7" stroke-dasharray="1,3"/>
<path d="M84,41 L112,45 L112,62 L86,58Z" fill="#5a3222"/>
<circle cx="98" cy="39" r="2" fill="#c0c0c8"/><circle cx="106" cy="41" r="2" fill="#c0c0c8"/><circle cx="94" cy="59" r="2" fill="#b8b8c0"/><circle cx="102" cy="62" r="2" fill="#b8b8c0"/>
<rect x="83" y="41" width="3" height="12" fill="#e0d0a0"/>
<path d="M62,30 Q72,27 80,32 L84,42 L81,55 Q70,57 62,48Z" fill="#d2a090"/>
<path d="M76,20 Q88,19 96,28 L92,40 L80,34Z" fill="#b88e80"/>
<path d="M80,58 L95,56 L96,71 L82,71Z" fill="#6a4028"/>
<path d="M96,62 L112,62 L112,71 L96,71Z" fill="#c4c4c8"/></svg></div>
<div class="a" style="left:485px;top:350px;width:115px;height:75px;border:solid #1a90fa;border-width:2px 0 2px 3px"></div>
<svg class="a" style="left:485px;top:416px" width="10" height="9"><polygon points="0,0 9,9 0,9" fill="#1a90fa"/><polygon points="0,1.5 7,9 0,9" fill="#ffffff"/><line x1="-0.5" y1="0.8" x2="8" y2="9.5" stroke="#000" stroke-width="1.1"/></svg>
<div class="a lbl" style="left:488px;top:352px;background:#f8c878;color:#2a2418"><span>Cam03Shot05</span></div>
<svg class="a" style="left:485px;top:350px" width="11" height="11"><polygon points="0,0 10,0 0,10" fill="#1a90fa"/><polygon points="0,0 7,0 0,7" fill="#0000ff"/><line x1="7.8" y1="-0.3" x2="-0.3" y2="7.8" stroke="#000" stroke-width="1.1"/></svg>
<div class="a" style="left:485px;top:425px;width:115px;height:74px;background:#d9d9d9"></div>
<div class="a" style="left:488px;top:465px;width:112px;height:1px;background:#6f6f6f"></div>
<div class="a" style="left:553px;top:428px;width:1px;height:71px;background:repeating-linear-gradient(#f2f2f2 0 1px,transparent 1px 2px)"></div>
<svg class="a" style="left:488px;top:435px;overflow:visible" width="113" height="20"><g transform="translate(0,10.5)"><path d="M0,-0.5 L0.5,-0.5 L1.5,-0.5 L2.5,-0.5 L3.5,-0.5 L4.5,-0.5 L5.5,-0.7 L6.5,-0.6 L7.5,-0.9 L8.5,-1.2 L9.5,-1.7 L10.5,-1.3 L11.5,-1.4 L12.5,-1.5 L13.5,-1.7 L14.5,-1.2 L15.5,-0.6 L16.5,-0.6 L17.5,-0.5 L18.5,-0.6 L19.5,-1.1 L20.5,-0.7 L21.5,-1.0 L22.5,-1.5 L23.5,-1.0 L24.5,-0.8 L25.5,-0.9 L26.5,-0.7 L27.5,-0.5 L28.5,-0.5 L29.5,-0.5 L30.5,-0.5 L31.5,-0.5 L32.5,-0.5 L33.5,-0.7 L34.5,-1.6 L35.5,-1.7 L36.5,-2.5 L37.5,-2.2 L38.5,-1.5 L39.5,-1.1 L40.5,-0.5 L41.5,-0.5 L42.5,-0.8 L43.5,-0.5 L44.5,-0.5 L45.5,-0.5 L46.5,-0.5 L47.5,-0.8 L48.5,-0.8 L49.5,-0.6 L50.5,-0.6 L51.5,-0.5 L52.5,-0.5 L53.5,-0.6 L54.5,-0.7 L55.5,-1.1 L56.5,-0.6 L57.5,-0.5 L58.5,-0.5 L59.5,-0.5 L60.5,-0.5 L61.5,-0.5 L62.5,-0.5 L63.5,-0.5 L64.5,-0.5 L65.5,-0.5 L66.5,-1.4 L67.5,-1.5 L68.5,-1.6 L69.5,-1.1 L70.5,-0.7 L71.5,-0.5 L72.5,-0.5 L73.5,-1.1 L74.5,-0.7 L75.5,-1.3 L76.5,-2.0 L77.5,-1.4 L78.5,-1.4 L79.5,-1.0 L80.5,-0.6 L81.5,-0.5 L82.5,-0.5 L83.5,-0.5 L84.5,-0.5 L85.5,-1.1 L86.5,-1.5 L87.5,-2.2 L88.5,-2.5 L89.5,-2.2 L90.5,-1.4 L91.5,-0.5 L92.5,-0.5 L93.5,-0.5 L94.5,-0.5 L95.5,-0.5 L96.5,-0.5 L97.5,-0.8 L98.5,-0.6 L99.5,-0.5 L100.5,-0.8 L101.5,-0.8 L102.5,-0.5 L103.5,-0.6 L104.5,-0.5 L105.5,-0.5 L106.5,-0.5 L107.5,-0.5 L108.5,-0.5 L109.5,-0.5 L110.5,-0.5 L111.5,-0.5 L112.5,-0.5 L112,-0.5 L112,0.5 L112.5,0.5 L111.5,0.5 L110.5,0.5 L109.5,0.5 L108.5,0.5 L107.5,0.5 L106.5,0.5 L105.5,0.5 L104.5,0.5 L103.5,0.5 L102.5,0.5 L101.5,0.6 L100.5,0.6 L99.5,0.5 L98.5,0.5 L97.5,1.0 L96.5,0.5 L95.5,0.5 L94.5,0.5 L93.5,0.5 L92.5,0.5 L91.5,0.5 L90.5,1.5 L89.5,1.6 L88.5,2.3 L87.5,1.8 L86.5,1.1 L85.5,1.4 L84.5,0.5 L83.5,0.5 L82.5,0.5 L81.5,0.5 L80.5,0.5 L79.5,0.9 L78.5,1.6 L77.5,1.5 L76.5,2.3 L75.5,1.5 L74.5,0.8 L73.5,1.1 L72.5,0.5 L71.5,0.5 L70.5,0.7 L69.5,0.8 L68.5,1.8 L67.5,1.5 L66.5,1.0 L65.5,0.6 L64.5,0.5 L63.5,0.5 L62.5,0.5 L61.5,0.5 L60.5,0.5 L59.5,0.5 L58.5,0.5 L57.5,0.5 L56.5,0.5 L55.5,0.9 L54.5,0.8 L53.5,0.5 L52.5,0.6 L51.5,0.5 L50.5,0.5 L49.5,0.5 L48.5,0.7 L47.5,0.8 L46.5,0.5 L45.5,0.5 L44.5,0.5 L43.5,0.5 L42.5,0.8 L41.5,0.5 L40.5,0.5 L39.5,1.3 L38.5,1.4 L37.5,2.5 L36.5,2.1 L35.5,1.5 L34.5,1.2 L33.5,0.6 L32.5,0.5 L31.5,0.5 L30.5,0.5 L29.5,0.5 L28.5,0.5 L27.5,0.5 L26.5,0.5 L25.5,1.0 L24.5,0.6 L23.5,0.9 L22.5,1.4 L21.5,0.7 L20.5,0.7 L19.5,1.3 L18.5,0.7 L17.5,0.6 L16.5,0.7 L15.5,0.5 L14.5,1.4 L13.5,1.5 L12.5,1.6 L11.5,1.5 L10.5,1.3 L9.5,1.8 L8.5,1.0 L7.5,0.9 L6.5,0.5 L5.5,0.8 L4.5,0.5 L3.5,0.5 L2.5,0.5 L1.5,0.5 L0.5,0.5 L0,0.5Z" fill="#3d6a4c"/></g></svg>
<svg class="a" style="left:488px;top:474px;overflow:visible" width="113" height="20"><g transform="translate(0,10.5)"><path d="M0,-0.5 L0.5,-0.5 L1.5,-0.5 L2.5,-0.5 L3.5,-0.5 L4.5,-0.5 L5.5,-1.0 L6.5,-2.2 L7.5,-2.6 L8.5,-1.4 L9.5,-3.2 L10.5,-4.2 L11.5,-3.7 L12.5,-2.9 L13.5,-2.5 L14.5,-1.7 L15.5,-2.6 L16.5,-2.0 L17.5,-1.5 L18.5,-1.2 L19.5,-1.3 L20.5,-1.3 L21.5,-0.8 L22.5,-2.0 L23.5,-1.8 L24.5,-1.2 L25.5,-1.2 L26.5,-0.9 L27.5,-0.6 L28.5,-0.5 L29.5,-0.5 L30.5,-0.5 L31.5,-0.5 L32.5,-0.5 L33.5,-1.6 L34.5,-1.8 L35.5,-1.5 L36.5,-2.7 L37.5,-1.8 L38.5,-1.6 L39.5,-1.6 L40.5,-0.8 L41.5,-0.7 L42.5,-1.5 L43.5,-0.6 L44.5,-0.5 L45.5,-0.5 L46.5,-0.5 L47.5,-1.1 L48.5,-1.1 L49.5,-1.0 L50.5,-0.8 L51.5,-0.5 L52.5,-0.5 L53.5,-0.5 L54.5,-0.7 L55.5,-0.6 L56.5,-0.7 L57.5,-0.7 L58.5,-0.5 L59.5,-0.5 L60.5,-0.5 L61.5,-0.5 L62.5,-0.5 L63.5,-0.5 L64.5,-0.5 L65.5,-0.7 L66.5,-1.0 L67.5,-2.6 L68.5,-1.3 L69.5,-1.4 L70.5,-0.9 L71.5,-0.7 L72.5,-0.8 L73.5,-1.9 L74.5,-1.4 L75.5,-2.7 L76.5,-3.0 L77.5,-2.2 L78.5,-2.4 L79.5,-1.9 L80.5,-0.8 L81.5,-0.5 L82.5,-0.5 L83.5,-0.5 L84.5,-0.5 L85.5,-0.8 L86.5,-2.1 L87.5,-3.0 L88.5,-4.0 L89.5,-1.8 L90.5,-2.0 L91.5,-1.8 L92.5,-0.5 L93.5,-0.5 L94.5,-0.5 L95.5,-0.5 L96.5,-0.5 L97.5,-0.8 L98.5,-1.2 L99.5,-1.1 L100.5,-1.5 L101.5,-0.8 L102.5,-0.6 L103.5,-0.8 L104.5,-0.5 L105.5,-0.5 L106.5,-0.5 L107.5,-0.5 L108.5,-0.5 L109.5,-0.5 L110.5,-0.5 L111.5,-0.5 L112.5,-0.5 L112,-0.5 L112,0.5 L112.5,0.5 L111.5,0.5 L110.5,0.5 L109.5,0.5 L108.5,0.5 L107.5,0.5 L106.5,0.5 L105.5,0.5 L104.5,0.6 L103.5,0.9 L102.5,0.5 L101.5,1.0 L100.5,1.8 L99.5,0.9 L98.5,1.1 L97.5,0.9 L96.5,0.5 L95.5,0.5 L94.5,0.5 L93.5,0.5 L92.5,0.5 L91.5,1.7 L90.5,2.3 L89.5,1.4 L88.5,3.5 L87.5,3.6 L86.5,2.5 L85.5,0.6 L84.5,0.5 L83.5,0.5 L82.5,0.5 L81.5,0.5 L80.5,0.7 L79.5,2.1 L78.5,2.6 L77.5,2.6 L76.5,2.6 L75.5,2.6 L74.5,1.1 L73.5,2.0 L72.5,1.0 L71.5,0.6 L70.5,1.0 L69.5,1.6 L68.5,1.0 L67.5,2.4 L66.5,1.1 L65.5,0.6 L64.5,0.5 L63.5,0.5 L62.5,0.5 L61.5,0.5 L60.5,0.5 L59.5,0.5 L58.5,0.5 L57.5,0.7 L56.5,0.5 L55.5,0.5 L54.5,0.6 L53.5,0.5 L52.5,0.5 L51.5,0.5 L50.5,0.9 L49.5,1.1 L48.5,1.1 L47.5,1.1 L46.5,0.5 L45.5,0.5 L44.5,0.5 L43.5,0.5 L42.5,1.2 L41.5,0.8 L40.5,0.7 L39.5,1.8 L38.5,1.5 L37.5,2.1 L36.5,2.1 L35.5,1.1 L34.5,1.3 L33.5,1.4 L32.5,0.5 L31.5,0.5 L30.5,0.5 L29.5,0.5 L28.5,0.5 L27.5,0.7 L26.5,0.6 L25.5,1.4 L24.5,1.2 L23.5,1.6 L22.5,2.0 L21.5,0.8 L20.5,1.0 L19.5,1.0 L18.5,1.3 L17.5,1.5 L16.5,1.8 L15.5,2.4 L14.5,1.3 L13.5,2.2 L12.5,2.3 L11.5,3.2 L10.5,5.0 L9.5,3.8 L8.5,1.1 L7.5,1.9 L6.5,1.9 L5.5,1.0 L4.5,0.5 L3.5,0.5 L2.5,0.5 L1.5,0.5 L0.5,0.5 L0,0.5Z" fill="#3d6a4c"/></g></svg>
<div class="a" style="left:485px;top:425px;width:115px;height:74px;border:solid #e4fa00;border-width:3px 0 0px 3px"></div>
<div class="a lbl" style="left:488px;top:428px;background:#78c890;color:#203024"><span>Cam03Shot05</span></div>
<svg class="a" style="left:485px;top:425px" width="11" height="11"><polygon points="0,0 10,0 0,10" fill="#e4fa00"/><polygon points="0,0 7,0 0,7" fill="#00e0ff"/><line x1="7.8" y1="-0.3" x2="-0.3" y2="7.8" stroke="#000" stroke-width="1.1"/></svg>
<div class="a" style="left:336px;top:35px;width:1px;height:465px;background:#0c0c0c;"></div>
<svg class="a" style="left:330px;top:20px" width="13" height="16"><path d="M1,0 H12 V9 L6.5,15 L1,9 Z" fill="#f2f2f2"/><rect x="4.6" y="2" width="1.6" height="6" fill="#2a2a2a"/><rect x="7.4" y="2" width="1.6" height="6" fill="#2a2a2a"/></svg>
<div class="a" style="left:46px;top:499px;width:554px;height:20px;background:#464646;"></div>
<div class="a" style="left:46px;top:499px;width:21px;height:20px;background:#2e2e2e;"></div>
<svg class="a" style="left:54px;top:507px" width="5" height="6"><polygon points="3.5,0 3.5,5 0.5,2.5" fill="#e8e8e8"/></svg>
<div class="a" style="left:77px;top:503px;width:4px;height:13px;background:#333333;"></div>
<div class="a" style="left:46px;top:519px;width:554px;height:27px;background:#222222;"></div>
<svg class="a" style="left:46px;top:519px" width="554" height="27" viewBox="46 519 554 27">
<circle cx="60" cy="535" r="7.3" fill="#f36f5a"/>
<path d="M86.6,531.4 H84.2 C78.6,531.4 78.6,537 82.3,538.7" fill="none" stroke="#ececec" stroke-width="1.6" stroke-linecap="round"/>
<path d="M91.2,531.4 H93 C98.6,531.4 98.6,539.5 93,539.5 H85" fill="none" stroke="#ececec" stroke-width="1.6" stroke-linecap="round"/>
<path d="M88.4,535.6 L84.6,539.4 L88,542.6" fill="none" stroke="#ececec" stroke-width="1.6" stroke-linecap="round" stroke-linejoin="round"/>
<rect x="88.1" y="529" width="1.8" height="3.4" fill="#cfcfcf"/>
<rect x="109.5" y="529" width="2.5" height="12" fill="#9a9a9a"/><polygon points="112.5,529 122,535 112.5,541" fill="#ececec"/>
<polygon points="138,527.5 152,535 138,543" fill="#ececec"/>
<rect x="164.5" y="528" width="5" height="14" fill="#ececec"/><rect x="174" y="528" width="5" height="14" fill="#ececec"/>
<rect x="192.5" y="528" width="15" height="14" fill="#ececec"/>
<rect x="221.5" y="529.5" width="2.5" height="12" fill="#ececec"/><polygon points="233,529.5 224,535.5 233,541.5" fill="#ececec"/>
<polygon points="251,529.5 260,535.5 251,541.5" fill="#ececec"/><rect x="260.5" y="529.5" width="2.5" height="12" fill="#ececec"/>
<polygon points="287,529.5 278,535.5 287,541.5" fill="#ececec"/><rect x="288" y="529.5" width="2" height="12" fill="#ececec"/><rect x="291.5" y="529.5" width="2" height="12" fill="#ececec"/>
<rect x="305" y="529.5" width="2" height="12" fill="#ececec"/><rect x="308.5" y="529.5" width="2" height="12" fill="#ececec"/><polygon points="311,529.5 320,535.5 311,541.5" fill="#ececec"/>
<rect x="331" y="523" width="26.5" height="23" fill="#3598f2"/>
<path d="M335.8,527 L353,532.6 Q347.5,534.2 345.6,537 Q343.6,540.2 341.8,543.6 Z" fill="#f0f0f0" stroke="#1a1410" stroke-width="1.1" stroke-linejoin="round"/>
<polygon points="363,533.5 373,533.5 368,538.5" fill="#ececec"/>
<rect x="386.5" y="528.5" width="5" height="5" fill="none" stroke="#ececec" stroke-width="1.4"/><rect x="395" y="528.5" width="5" height="5" fill="none" stroke="#ececec" stroke-width="1.4"/><rect x="383.5" y="537.8" width="5" height="5" fill="none" stroke="#ececec" stroke-width="1.4"/><path d="M391.5,531 H395 M387.5,533.5 V537.8" fill="none" stroke="#ececec" stroke-width="1.2"/>
<rect x="412" y="528.5" width="15" height="15" fill="none" stroke="#ececec" stroke-width="1.6" stroke-dasharray="2.5,1.8"/>
<circle cx="446.5" cy="534.5" r="6.5" fill="none" stroke="#ececec" stroke-width="1.6"/><line x1="451" y1="539" x2="456" y2="544" stroke="#ececec" stroke-width="1.8"/>
<rect x="463.5" y="523" width="1" height="23" fill="#3a3a3a"/>
<path d="M473,527.5 L487,541.5 M487,527.5 L473,541.5" stroke="#f07058" stroke-width="1.8"/>
<defs><pattern id="hat" width="3" height="3" patternUnits="userSpaceOnUse" patternTransform="rotate(45)"><rect width="1.5" height="3" fill="#5c5c5c"/></pattern></defs>
<rect x="498" y="530" width="6" height="11" fill="url(#hat)"/><rect x="505" y="530" width="6" height="11" fill="#5a5a5a"/><rect x="512" y="530" width="5" height="11" fill="url(#hat)"/>
<rect x="504" y="527" width="1.5" height="17" fill="#666"/><rect x="510.5" y="527" width="1.5" height="17" fill="#666"/>
<rect x="527" y="530" width="9" height="11" fill="url(#hat)"/><rect x="536.5" y="527" width="1.5" height="17" fill="#666"/><rect x="538" y="530" width="6.5" height="11" fill="#5a5a5a"/>
<rect x="555" y="530" width="7" height="11" fill="#5a5a5a"/><rect x="562" y="527" width="1.5" height="17" fill="#666"/><rect x="564" y="530" width="8" height="11" fill="url(#hat)"/>
<rect x="583" y="530" width="7" height="11" fill="#5a5a5a"/><rect x="590.5" y="527" width="1.5" height="17" fill="#666"/><rect x="593" y="530" width="7" height="11" fill="#5a5a5a"/>
</svg>
</body></html>
